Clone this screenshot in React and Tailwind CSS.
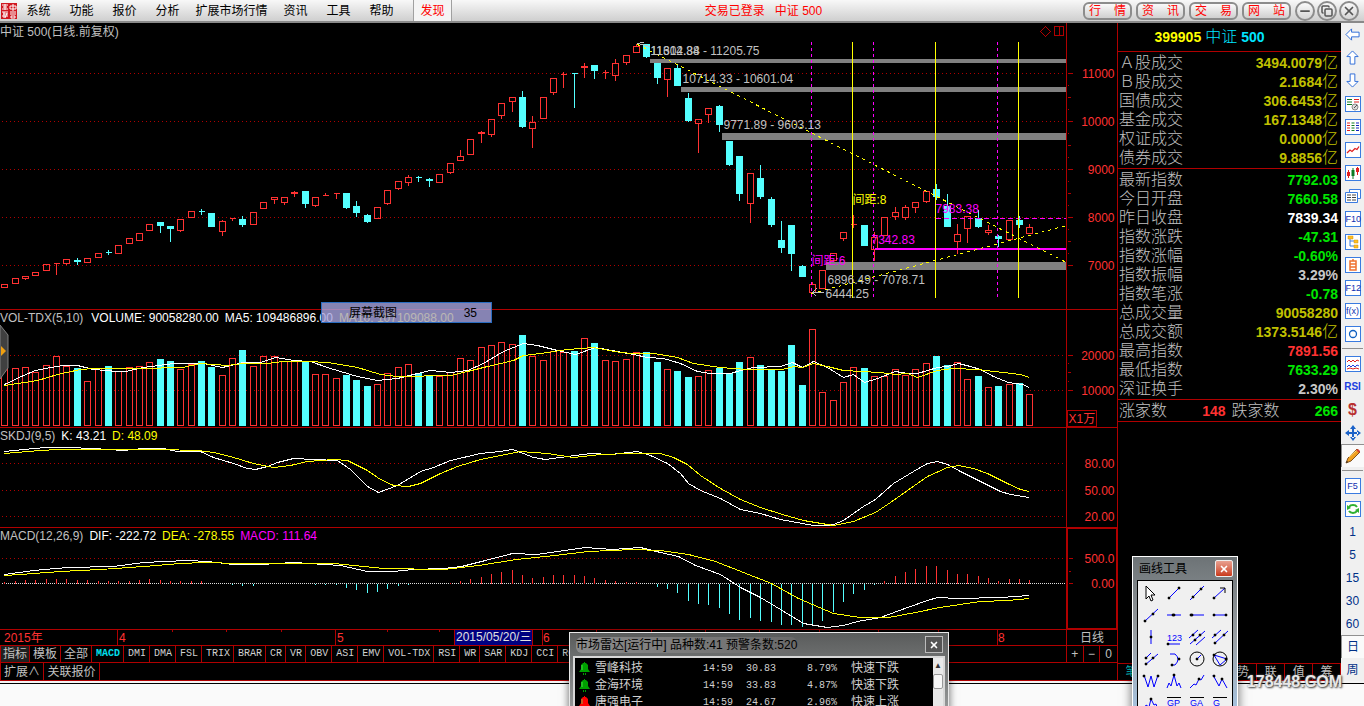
import { Minus, X, Copy } from 'lucide-react';

// One row per trading day: [rising, high, body top, body bottom, low, volume top, macd bar]
// Prices and volume are already in plot units, measured from the top of the window.
const DAYS = [
  [1, 284, 284, 288, 288, 365, 2], [1, 278, 278, 284, 284, 368, 3], [1, 276, 276, 279, 280, 367, 4], [1, 272, 272, 276, 276, 372, 4],
  [1, 264, 264, 271, 271, 365, 5], [1, 263, 263, 264, 275, 356, 5], [1, 258, 259, 264, 265, 366, 5], [0, 257, 260, 262, 265, 368, 4],
  [1, 258, 258, 263, 263, 381, 4], [1, 253, 253, 258, 258, 368, 3], [0, 249, 252, 253, 255, 366, 3], [1, 245, 245, 254, 254, 371, 3],
  [1, 238, 238, 244, 244, 367, 3], [1, 233, 233, 241, 241, 366, 4], [1, 224, 224, 231, 231, 362, 5], [0, 221, 222, 226, 233, 359, 4],
  [0, 226, 226, 229, 242, 361, 3], [1, 219, 219, 231, 232, 369, 3], [1, 211, 211, 218, 218, 364, 3], [0, 208, 211, 212, 215, 361, 3],
  [0, 213, 213, 227, 227, 367, 0], [1, 219, 221, 232, 236, 375, 0], [1, 217, 218, 219, 221, 358, -1], [0, 215, 219, 225, 227, 350, -2],
  [1, 212, 212, 225, 225, 366, -2], [1, 202, 202, 209, 209, 356, 0], [1, 197, 197, 200, 204, 356, 0], [1, 196, 197, 203, 205, 361, 0],
  [1, 190, 192, 194, 197, 360, 0], [0, 191, 191, 204, 208, 362, 0], [1, 196, 197, 206, 207, 374, -1], [1, 192, 195, 196, 196, 374, -1],
  [1, 192, 193, 194, 199, 378, -1], [0, 193, 193, 208, 209, 375, -4], [0, 200, 206, 213, 217, 380, -6], [0, 213, 215, 222, 223, 386, -9],
  [1, 207, 207, 219, 219, 384, -8], [1, 190, 190, 204, 205, 373, -5], [1, 181, 181, 189, 190, 367, -2], [1, 174, 177, 183, 186, 364, -1],
  [0, 175, 177, 178, 182, 373, 0], [0, 177, 179, 181, 187, 375, 0], [1, 173, 174, 183, 183, 376, 0], [1, 163, 163, 173, 174, 372, 1],
  [1, 149, 156, 161, 161, 358, 3], [1, 139, 139, 155, 155, 360, 5], [1, 130, 132, 134, 143, 347, 7], [1, 119, 119, 135, 137, 345, 10],
  [1, 103, 103, 116, 119, 342, 12], [1, 96, 97, 102, 112, 344, 14], [0, 90, 97, 127, 128, 335, 9], [1, 115, 122, 129, 148, 356, 6],
  [1, 97, 97, 119, 119, 360, 7], [1, 78, 78, 93, 95, 351, 9], [1, 71, 74, 75, 88, 352, 9], [0, 72, 73, 74, 108, 351, 9],
  [1, 62, 66, 68, 78, 338, 8], [0, 65, 65, 71, 79, 343, 6], [1, 69, 72, 73, 79, 360, 4], [1, 58, 63, 76, 81, 361, 3],
  [1, 55, 55, 63, 65, 359, 2], [1, 43, 46, 53, 53, 352, 2], [0, 43, 44, 57, 58, 352, 0], [0, 63, 63, 78, 84, 362, -3],
  [1, 67, 68, 80, 97, 369, -5], [0, 64, 68, 86, 86, 371, -9], [0, 92, 98, 121, 122, 377, -17], [1, 118, 119, 124, 153, 376, -20],
  [1, 108, 108, 115, 123, 370, -21], [0, 104, 106, 125, 132, 368, -24], [0, 140, 141, 165, 166, 373, -30], [0, 155, 156, 194, 201, 362, -36],
  [1, 173, 173, 204, 223, 357, -34], [0, 164, 178, 197, 199, 365, -37], [0, 196, 199, 225, 227, 369, -38], [0, 220, 240, 248, 253, 371, -41],
  [0, 225, 225, 254, 271, 345, -41], [0, 264, 266, 277, 277, 385, -43], [1, 281, 284, 293, 293, 329, -42], [1, 270, 270, 289, 289, 392, -37],
  [1, 253, 253, 261, 261, 400, -28], [1, 232, 232, 239, 241, 382, -18], [1, 214, 224, 225, 228, 367, -10], [0, 225, 225, 246, 246, 368, -6],
  [1, 231, 237, 250, 261, 376, -1], [1, 216, 217, 236, 236, 376, 3], [1, 206, 212, 217, 220, 369, 8], [1, 204, 207, 218, 220, 375, 12],
  [1, 201, 202, 208, 213, 369, 15], [1, 190, 191, 202, 203, 363, 18], [0, 183, 189, 197, 200, 356, 18], [0, 193, 206, 227, 227, 365, 14],
  [1, 223, 234, 242, 254, 362, 10], [1, 216, 216, 229, 243, 379, 10], [0, 209, 218, 227, 228, 376, 8], [1, 224, 230, 233, 235, 387, 6],
  [0, 234, 236, 239, 247, 386, 3], [1, 220, 220, 240, 240, 384, 5], [0, 215, 220, 225, 228, 383, 5], [1, 223, 227, 234, 234, 394, 4],
];

const VOL_MA5 = '4,384 23,375 35,370 50,367 63,365 77,365 93,369 117,371 125,371 143,367 173,363 203,363 222,367 243,362 260,362 275,357 293,360 310,361 327,367 340,371 357,376 377,380 397,378 413,374 430,370 450,372 467,370 483,363 503,351 523,343 537,345 557,350 575,354 595,347 617,351 633,354 647,357 663,358 680,363 697,371 710,373 730,373 740,370 753,367 780,366 792,362 802,367 813,361 827,367 843,377 853,374 864,382 877,378 895,371 907,373 917,373 937,367 947,366 958,363 970,366 980,369 993,376 1008,382 1022,384 1029,387';
const VOL_MA10 = '4,385 37,380 57,374 80,369 93,368 140,368 182,367 200,363 227,365 243,363 267,363 283,361 307,361 327,362 357,367 380,374 397,376 450,375 467,371 487,366 513,360 523,355 540,353 567,349 593,347 620,352 633,353 653,353 677,357 693,363 720,367 747,369 782,369 793,366 802,367 813,363 827,366 843,370 880,372 895,374 907,373 917,377 937,370 953,368 977,369 1020,374 1029,377';
const SK_K = '4,451 33,448 47,447 67,447 93,448 123,450 143,448 163,448 177,451 200,451 213,457 233,463 247,468 255,469 267,466 277,462 293,458 313,459 337,460 350,469 367,486 378,492 397,485 420,471 433,467 450,460 480,453 500,451 512,449 523,453 533,457 545,459 567,456 590,453 610,454 637,451 650,455 667,463 680,473 688,483 700,490 720,498 740,509 760,513 780,519 813,525 827,525 833,524 843,520 863,506 875,499 893,483 913,471 927,463 937,461 947,464 960,471 980,481 1000,491 1010,494 1029,497';
const SK_D = '4,453 40,450 57,449 100,449 160,449 197,450 213,452 230,456 253,463 273,467 290,465 307,461 333,459 347,460 367,470 380,479 393,485 408,486 420,483 440,473 457,466 480,459 500,455 520,451 547,453 573,457 600,454 633,453 660,453 673,457 687,464 700,475 720,488 740,499 760,507 782,514 803,520 833,525 853,521 875,512 890,502 907,490 927,476 947,467 958,465 973,468 987,473 1007,483 1020,489 1029,491';
const DIF = '4,574 33,570 67,567 113,566 143,562 187,560 207,561 233,564 260,564 293,562 340,565 367,571 393,571 413,569 443,568 461,566 485,560 512,553 536,554 557,551 585,547 612,549 640,547 660,552 678,556 695,565 720,574 740,587 760,597 780,609 803,623 827,627 843,625 857,621 880,617 907,607 927,600 937,597 957,598 1000,597 1029,595';
const DEA = '4,575 20,574 60,571 100,569 143,566 180,563 203,562 240,563 333,563 383,568 443,569 478,565 516,559 554,555 588,551 633,549 660,550 688,554 715,561 743,572 771,583 798,598 833,613 860,617 888,617 915,612 939,607 980,601 1007,600 1029,598';

const RED = '#ff3232';
const CYAN = '#54ffff';
const LINE = '#b00000';

const dayX = (i) => Math.floor(4.85 + i * 10.3535);

function Candle({ day, x }) {
  const [up, h, t, b, l] = day;
  return (
    <path
      d={`M${x - 3} ${t}H${x + 3}V${b - 1}H${x - 3}ZM${x} ${h}V${t}M${x} ${b - 1}V${l - 1}`}
      stroke={up ? RED : CYAN}
      fill={up ? 'none' : CYAN}
    />
  );
}

function GridLines({ at }) {
  return at.map((y) => (
    <line key={y} x1="1" x2="100%" y1={y} y2={y} stroke={LINE} strokeDasharray="1 3" />
  ));
}

function Curve({ points, color }) {
  return <polyline points={points} fill="none" stroke={color} />;
}

// A plot with its title laid over it and the value axis on its right.
function Panel({ height, top, title, plot, axis, axisClass = 'border-x border-[#b00000]' }) {
  return (
    <section className={`flex border-b border-[#b00000] ${height}`}>
      <div className="grid min-w-0 flex-1 overflow-hidden">
        <svg className="col-start-1 row-start-1 h-full w-full" shapeRendering="crispEdges" fontSize="12">
          <g transform={`translate(0.5 ${0.5 - top})`}>{plot}</g>
        </svg>
        <div className="col-start-1 row-start-1 flex gap-[6px] leading-4 whitespace-nowrap">{title}</div>
      </div>
      <div className={`w-[52px] shrink-0 ${axisClass}`}>
        <svg className="h-full w-full" shapeRendering="crispEdges" fontSize="12">
          <g transform={`translate(0.5 ${0.5 - top})`}>{axis}</g>
        </svg>
      </div>
    </section>
  );
}

function AxisLabels({ items, right = 47 }) {
  return items.map(([label, y]) => (
    <text key={label} x={right} y={y + 4} textAnchor="end" fill={RED}>{label}</text>
  ));
}

function Ticks({ items }) {
  return items.map(([y, w]) => <line key={y} x1="0" x2={w} y1={y} y2={y} stroke={LINE} />);
}

const PRICE_TICKS = [
  [73, 5], [85, 1], [97, 3], [109, 1], [121, 5], [133, 1], [145, 3], [157, 1], [169, 5], [181, 1],
  [193, 3], [205, 1], [217, 5], [229, 1], [241, 3], [253, 1], [265, 5],
];

function PricePlot() {
  return (
    <>
      <GridLines at={[73, 121, 169, 217, 265]} />
      <g fill="#808080">
        <rect x="649" y="58" width="1000" height="4" />
        <rect x="680" y="86" width="1000" height="5" />
        <rect x="721" y="132" width="1000" height="7" />
        <rect x="825" y="261" width="1000" height="8" />
      </g>
      {DAYS.map((d, i) => <Candle key={i} day={d} x={dayX(i)} />)}
      <g stroke="#ff00ff" strokeDasharray="3 3">
        <path d="M811 41V296M873 41V296M997 41V296" fill="none" />
        <line x1="935" x2="100%" y1="218" y2="218" strokeDasharray="5 3" />
      </g>
      <line x1="874" x2="100%" y1="248" y2="248" stroke="#ff00ff" strokeWidth="2" />
      <path d="M852 41V297M935 41V297M1018 41V297" stroke="#ffff00" />
      <path d="M637 44L1066 262M811 293L1066 225" stroke="#ffff00" strokeDasharray="3 4" />
      <g fill="#c0c0c0">
        <text x="650" y="54">11604.84</text>
        <text x="650" y="54">11312.38 - 11205.75</text>
        <text x="682" y="82">10714.33 - 10601.04</text>
        <text x="723" y="128">9771.89 - 9603.13</text>
        <text x="827" y="283">6896.49 - 7078.71</text>
        <text x="825" y="297">6444.25</text>
      </g>
      <path d="M823 292H812M816 288L812 292L816 296M650 46L637 43M639 42H643" stroke="#c0c0c0" fill="none" />
      <text x="852" y="203" fill="#ffff00">间距:8</text>
      <text x="811" y="264" fill="#ff00ff">间距:6</text>
      <text x="935" y="212" fill="#ff00ff">7983.38</text>
      <text x="871" y="243" fill="#ff00ff">7342.83</text>
      <path d="M1045 26L1050 31L1045 36L1040 31ZM1054 26H1063V35H1054ZM1059 26V35" stroke={LINE} fill="none" />
    </>
  );
}

function VolumePlot() {
  return (
    <>
      <GridLines at={[355, 390]} />
      {DAYS.map((d, i) => (
        <path
          key={i}
          d={`M${dayX(i) - 3} ${d[5]}h6V425h-6Z`}
          stroke={d[0] ? RED : CYAN}
          fill={d[0] ? 'none' : CYAN}
        />
      ))}
      <Curve points={VOL_MA5} color="#fff" />
      <Curve points={VOL_MA10} color="#ff0" />
    </>
  );
}

function MacdPlot() {
  return (
    <>
      <GridLines at={[558]} />
      <line x1="1" x2="100%" y1="583" y2="583" stroke="#e0e0e0" strokeDasharray="1 1" />
      {DAYS.map((d, i) => d[6] !== 0 && (
        <path key={i} d={`M${dayX(i)} 583v${-d[6]}`} stroke={d[6] > 0 ? RED : CYAN} />
      ))}
      <Curve points={DIF} color="#fff" />
      <Curve points={DEA} color="#ff0" />
    </>
  );
}

const MENUS = ['系统', '功能', '报价', '分析', '扩展市场行情', '资讯', '工具', '帮助'];

function Header() {
  return (
    <header className="flex h-[23px] shrink-0 items-center border-b-2 border-[#8a8a8a] bg-linear-to-b from-[#f8f8f8] to-[#cfcfcf] text-xs text-black">
      <svg className="ml-px h-4 w-4" viewBox="0 0 16 16">
        <rect width="16" height="16" fill="#d01820" />
        <path d="M1 2h6M2 4h4M1 6h6M4 1v6M9 3h6v3H9zM12 1v7M1 9h6M2 11h5M1 13h6M3 9v6M6 10l-2 5M9 9h6M9 11h6M10 13h4v2h-4z" stroke="#fff" fill="none" />
      </svg>
      <nav className="flex h-full items-center">
        {MENUS.map((m) => (
          <button key={m} className={m.length > 2 ? 'w-[85px] whitespace-nowrap' : 'w-[43px]'}>{m}</button>
        ))}
      </nav>
      <button className="ml-[10px] h-full w-[39px] border-x border-[#a0a0a0] bg-[#f4f4f4] text-[#ff0000]">发现</button>
      <div className="flex-1 pr-2 text-center text-[#ff0000]">交易已登录 &nbsp; 中证 500</div>
      <div className="flex gap-1 pr-1">
        {['行情', '资讯', '交易', '网站'].map((t) => (
          <button key={t} aria-label={t} className="flex h-[18px] w-[49px] items-center justify-between rounded-md border-2 border-[#8c8c8c] bg-linear-to-b from-[#fafafa] to-[#d0d0d0] px-1 text-[#ff0000]">
            <span>{t[0]}</span>
            <span>{t[1]}</span>
          </button>
        ))}
      </div>
      <div className="flex gap-[2px] pr-[5px]">
        {[Minus, Copy, X].map((Icon, i) => (
          <button key={i} aria-label={['最小化', '还原', '关闭'][i]} className="grid h-5 w-5 place-items-center rounded-full border-2 border-[#8c8c8c] bg-linear-to-b from-[#fafafa] to-[#d4d4d4] text-[#555]">
            <Icon className={i === 1 ? 'h-3 w-3' : 'h-[14px] w-[14px]'} strokeWidth={3} />
          </button>
        ))}
      </div>
    </header>
  );
}

function TimeAxis() {
  return (
    <div className="flex h-4 border-b border-[#b00000]">
      <svg className="h-full min-w-0 flex-1" fontSize="12" fill={RED} shapeRendering="crispEdges">
        <path d="M117.5 0V16M335.5 0V16M542.5 0V16M997.5 0V16" stroke={LINE} />
        <path d="M172.5 0v2M226.5 0v2M281.5 0v2M387.5 0v2M439.5 0v2M596.5 0v2M651.5 0v2M705.5 0v2M759.5 0v2M819.5 0v2M878.5 0v2M938.5 0v2" stroke={LINE} />
        <text x="4" y="12">2015年</text>
        <text x="119" y="12">4</text>
        <text x="337" y="12">5</text>
        <text x="543" y="12">6</text>
        <text x="998" y="12">8</text>
        <rect x="454.5" y="-1" width="78" height="16" fill="#000080" stroke={LINE} />
        <text x="456" y="11" fill="#e0e0e0">2015/05/20/三</text>
      </svg>
      <div className="w-[52px] border-x border-[#b00000] text-center leading-4">日线</div>
    </div>
  );
}

const TABS = ['MACD', 'DMI', 'DMA', 'FSL', 'TRIX', 'BRAR', 'CR', 'VR', 'OBV', 'ASI', 'EMV', 'VOL-TDX', 'RSI', 'WR', 'SAR', 'KDJ', 'CCI', 'ROC'];

function IndicatorTabs() {
  return (
    <div className="flex h-[17px] border-b border-[#b00000]">
      <div className="flex min-w-0 flex-1 overflow-hidden border-l border-[#b00000]">
        {['指标', '模板', '全部'].map((t, i) => (
          <button key={t} className={`border-r border-[#b00000] leading-4 ${i === 0 ? 'w-[29px] bg-[#202020]' : 'w-[31px]'}`}>{t}</button>
        ))}
        {TABS.map((t) => (
          <button
            key={t}
            className={`border-r border-[#b00000] pr-[3px] pl-1 font-['Liberation_Mono',monospace] text-[10px] leading-4 ${t === 'MACD' ? 'font-bold text-[#00e0f0]' : 'text-[#d0d0d0]'}`}
          >
            {t}
          </button>
        ))}
      </div>
      <div className="grid w-[52px] grid-cols-3 divide-x divide-[#b00000] border-x border-[#b00000]">
        {['+', '−', '0'].map((t) => <button key={t} className="leading-4">{t}</button>)}
      </div>
    </div>
  );
}

const TURNOVER = [
  ['Ａ股成交', '3494.0079', '亿'], ['Ｂ股成交', '2.1684', '亿'], ['国债成交', '306.6453', '亿'],
  ['基金成交', '167.1348', '亿'], ['权证成交', '0.0000', '亿'], ['债券成交', '9.8856', '亿'],
].map((r) => [...r, 'text-[#c0c000]']);

const INDEX = [
  ['最新指数', '7792.03', '', 'text-[#00e600]'], ['今日开盘', '7660.58', '', 'text-[#00e600]'],
  ['昨日收盘', '7839.34', '', 'text-white'], ['指数涨跌', '-47.31', '', 'text-[#00e600]'],
  ['指数涨幅', '-0.60%', '', 'text-[#00e600]'], ['指数振幅', '3.29%', '', 'text-[#c8c8c8]'],
  ['指数笔涨', '-0.78', '', 'text-[#00e600]'], ['总成交量', '90058280', '', 'text-[#c0c000]'],
  ['总成交额', '1373.5146', '亿', 'text-[#c0c000]'], ['最高指数', '7891.56', '', 'text-[#ff3232]'],
  ['最低指数', '7633.29', '', 'text-[#00e600]'], ['深证换手', '2.30%', '', 'text-[#c8c8c8]'],
];

function QuoteTable({ rows }) {
  return (
    <div className="border-b border-[#b00000] py-px">
      <table className="w-full">
        <tbody>
          {rows.map(([label, value, unit, color]) => (
            <tr key={label}>
              <th scope="row" className="p-0 pl-px text-left align-top text-base leading-[19px] font-light">{label}</th>
              <td className="p-0 pr-[3px] align-top">
                <div className={`flex h-[19px] items-center justify-end text-sm font-bold ${color}`}>
                  {value}
                  {unit && <span className="text-base leading-[19px] font-light">{unit}</span>}
                </div>
              </td>
            </tr>
          ))}
        </tbody>
      </table>
    </div>
  );
}

function QuotePanel() {
  return (
    <aside className="flex w-[223px] shrink-0 flex-col text-[#c0c0c0]">
      <h1 className="flex h-[29px] items-center justify-center gap-1 border-b border-[#b00000] pr-10 text-sm font-bold text-[#00e5ff]">
        <span className="text-[#ffff00]">399905</span>
        <span className="text-base font-light">中证</span>
        <span>500</span>
      </h1>
      <QuoteTable rows={TURNOVER} />
      <QuoteTable rows={INDEX} />
      <div className="flex h-[22px] items-center border-b border-[#b00000] pr-[3px] pl-px text-base font-light">
        <span>涨家数</span>
        <span className="flex-1 text-right text-sm font-bold text-[#ff3232]">148</span>
        <span className="ml-[6px]">跌家数</span>
        <span className="flex-1 text-right text-sm font-bold text-[#00e600]">266</span>
      </div>
      <div className="flex-1" />
      <div className="grid h-[18px] grid-cols-8 border-y border-[#b00000]">
        {[...'笔价分盘势联值筹'].map((t, i) => (
          <button key={t} className={`border-r border-[#b00000] leading-4 ${i === 0 ? 'text-[#00c8c8]' : ''}`}>{t}</button>
        ))}
      </div>
    </aside>
  );
}

function Framed({ children }) {
  return (
    <svg className="h-4 w-4" viewBox="0 0 16 16" fill="none">
      <rect x="0.5" y="0.5" width="15" height="15" fill="#fff" stroke="#3a7be0" />
      {children}
    </svg>
  );
}

function ArrowIcon({ rotate }) {
  return (
    <svg className="h-[15px] w-[15px]" viewBox="0 0 16 16">
      <path d="M1 8L7 2V5.500H15V10.500H7V14Z" fill="#fff" stroke="#2a6ad8" transform={`rotate(${rotate} 8 8)`} />
    </svg>
  );
}

const SIDE_ICONS = [
  ['后退', <ArrowIcon rotate={0} />],
  ['上移', <ArrowIcon rotate={90} />],
  ['下移', <ArrowIcon rotate={-90} />],
  ['报价设置', <Framed><path d="M2 3.500h5M2 6h5M2 8.500h5" stroke="#0a7a20" /><path d="M9 3.500h5M9 6h5" stroke="#e02020" /><circle cx="10" cy="11" r="3" fill="#ddd" stroke="#888" /><path d="M9 12l3-3" stroke="#555" /></Framed>],
  ['报价', <Framed><path d="M2 4h3M2 6.500h3M2 9h3M2 11.500h3" stroke="#e02020" /><path d="M6.500 4h3M6.500 6.500h3M6.500 9h3M6.500 11.500h3" stroke="#0a7a20" /><path d="M11 4h3M11 6.500h3M11 9h3M11 11.500h3" stroke="#1020c0" /></Framed>],
  ['分时', <Framed><path d="M2 11l3-3 2 1.500 3-3 2 1 2-3" stroke="#e02020" strokeWidth="1.300" /></Framed>],
  ['K线', <Framed><path d="M3.500 5v8M12.500 2v8" stroke="#e02020" /><path d="M2 7h3v4H2zM11 3h3v4h-3z" fill="#e02020" /><path d="M8 3v11" stroke="#0a7a20" /><path d="M6.500 5h3v6h-3z" fill="#0a7a20" /></Framed>],
  ['资料', <svg className="h-4 w-4" viewBox="0 0 16 16"><path d="M4.500 1.500h11v9h-11z" fill="#fff" stroke="#3a7be0" /><path d="M.5 4.500h12v10H.5z" fill="#fff" stroke="#3a7be0" /><path d="M2 7h4M7 7h4M2 9.500h4M7 9.500h4M2 12h4M7 12h4" stroke="#444" /></svg>],
  ['F10', 'F10'],
  ['结构', <Framed><path d="M5 4v8h4M5 7h4" stroke="#3a7be0" /><path d="M3 2h5v3H3zM9 6h4v3H9zM9 11h4v3H9z" fill="#ffc020" stroke="#d09010" strokeWidth="0.500" /></Framed>],
  ['自选', <Framed><path d="M5 4h6v9H5zM5 7h6M5 10h6M8 2v2" stroke="#f07030" strokeWidth="1.500" /></Framed>],
  ['F12', 'F12'],
  ['公式', 'f(x)'],
  ['圆', <Framed><circle cx="8" cy="8" r="3.500" stroke="#1060c0" strokeWidth="1.300" /></Framed>],
  null,
  ['叠加', <Framed><path d="M2 6l2-2 2 2 2-2 2 2 2-2 2 1" stroke="#e02020" /><path d="M2 11l2-2 2 2 2-2 2 2 2-2 2 1" stroke="#2040e0" /><path d="M2 13l3-1 3 1 3-1 3 1" stroke="#e02020" /></Framed>],
  ['RSI', <span className="text-[10px] font-bold text-[#2040e0]">RSI</span>],
  ['资金', <span className="text-base leading-4 font-bold text-[#b83030]">$</span>],
  ['移动', <svg className="h-4 w-4" viewBox="0 0 16 16" fill="#1b62c8"><path d="M8 0l3 4H5zM8 16l3-4H5zM0 8l4-3v6zM16 8l-4-3v6zM7 3h2v10H7zM3 7h10v2H3z" /></svg>],
  ['画线', <svg className="h-4 w-4" viewBox="0 0 16 16"><path d="M1 15l2-5 9-9 3 3-9 9z" fill="#f0a020" stroke="#805020" /><path d="M4 9l8-7" stroke="#ffe090" /><path d="M11 2l3 3 1-2-2-2z" fill="#d84030" /><path d="M1 15l1-2 1 1z" fill="#222" /></svg>, true],
  null,
  ['F5', 'F5'],
  ['刷新', <Framed><path d="M12 6a4.500 3.500 0 0 0-8 0M4 10a4.500 3.500 0 0 0 8 0" stroke="#30b030" strokeWidth="2" /><path d="M2 4v5l4-2zM14 12V7l-4 2z" fill="#30b030" /></Framed>],
];

const PERIODS = ['1', '5', '15', '30', '60', '日', '周'];

function SideBar() {
  return (
    <div className="flex w-[23px] shrink-0 flex-col bg-[#f0f0f0] text-[#003088]">
      {SIDE_ICONS.map((item, i) => {
        if (!item) return <hr key={i} className="mx-px my-[3px] border-t border-[#909090]" />;
        const [name, icon, pressed] = item;
        return (
          <button
            key={i}
            aria-label={name}
            className={`grid h-[23px] place-items-center ${pressed ? 'border-t border-l border-[#909090] bg-[#fafafa]' : ''}`}
          >
            {typeof icon === 'string' ? (
              <span className="h-4 w-4 border border-[#3a7be0] bg-white text-center text-[9px] leading-[14px] text-[#1030b0]">
                {icon}
              </span>
            ) : icon}
          </button>
        );
      })}
      {PERIODS.map((p) => (
        <button key={p} className={`h-[23px] shrink-0 text-xs ${p === '日' ? 'border-t border-l border-[#909090] bg-[#fafafa]' : ''}`}>{p}</button>
      ))}
    </div>
  );
}

const ALERTS = [
  ['雪峰科技', '14:59', '30.83', '8.79%', '快速下跌', '#00a000'],
  ['金海环境', '14:59', '33.83', '4.87%', '快速下跌', '#00a000'],
  ['唐强电子', '14:59', '24.67', '2.96%', '快速上涨', '#ff0000'],
];

function RadarWindow() {
  return (
    <section className="absolute top-[632px] left-[569px] w-[380px] border border-[#e8e8e8] bg-linear-to-b from-[#5a5c5c] to-[#9a9c9c] px-[3px] text-xs shadow-[0_0_8px_rgba(0,0,0,0.6)]">
      <h2 className="flex h-[23px] items-center justify-between pl-[3px] text-black">
        <span className="rounded-md bg-linear-to-r from-[#8c8c8c] to-[#6a6a6a]">市场雷达[运行中] 品种数:41 预警条数:520</span>
        <button aria-label="关闭" className="mr-[2px] grid h-[17px] w-[18px] place-items-center border border-[#bbb] bg-[#555] text-white">
          <X className="h-[10px] w-[10px]" strokeWidth={4} />
        </button>
      </h2>
      <div className="flex border-2 border-[#d8d8d8] bg-black text-[#d0d0d0]">
        <div className="flex-1 pt-[2px]">
          <table className="w-full table-fixed">
            <tbody>
              {ALERTS.map(([name, time, price, rate, note, color]) => (
                <tr key={name} className="h-[17px] leading-[17px]">
                  <td className="w-5 p-0 pl-1">
                    <svg className="h-[13px] w-[11px]" viewBox="0 0 11 13" fill={color}>
                      <path d="M4 1h1V0h1v1h1l2 2v4l2 3H0l2-3V3zM4 11h1v2H4zM6 11h1v2H6z" />
                      <path d="M3 3v5" stroke="#60ff60" opacity="0.700" />
                    </svg>
                  </td>
                  <td className="w-[108px] p-0">{name}</td>
                  <td className="w-[43px] p-0 font-['Liberation_Mono',monospace] text-[10px]">{time}</td>
                  <td className="w-[43px] p-0 font-['Liberation_Mono',monospace] text-[10px]">{price}</td>
                  <td className="w-12 p-0 text-right font-['Liberation_Mono',monospace] text-[10px]">{rate}</td>
                  <td className="p-0 pl-[14px]">{note}</td>
                </tr>
              ))}
            </tbody>
          </table>
        </div>
        <div className="w-[10px] bg-[#e8e8e8] text-center text-[8px] leading-4 text-[#333]">
          ▲
          <div className="h-[15px] rounded-xs border border-[#999] bg-[#f8f8f8]" />
        </div>
      </div>
    </section>
  );
}

const dot = (x, y) => `M${x - 1} ${y - 1}h2v2h-2z`;

// [blue strokes, black handles, extra drawing]
const TOOLS = [
  [null, null, <path key="p" d="M5 3v13l3-3 2 5 2-1-2-5h4z" fill="#fff" stroke="#000" />],
  ['M5 15L15 5', dot(5, 15) + dot(15, 5)],
  ['M3 17L17 3', dot(6, 14) + dot(14, 6)],
  ['M4 15L15 5', dot(4, 15), <path key="p" d="M10 5h5v5" stroke="#000" fill="none" />],
  ['M4 16L17 4', dot(4, 16) + dot(12, 9)],
  ['M3 10H17', dot(10, 10) + dot(9, 10)],
  ['M4 10H17', dot(4, 10) + dot(5, 10)],
  ['M4 10H16', dot(4, 10) + dot(16, 10)],
  ['M10 3V17', dot(10, 10)],
  ['M3 17H16', dot(4, 17), <text key="t" x="3" y="14" fontSize="9" fill="#0000ff">123</text>],
  ['M2 11L11 3M3 17L18 4M9 18L18 10', dot(6, 8) + dot(13, 8) + dot(8, 13)],
  ['M2 11L11 3M4 17L18 4', dot(5, 8) + dot(14, 8) + dot(5, 16)],
  ['M4 10L10 4M4 16L17 5', dot(5, 9) + dot(12, 9) + dot(5, 15)],
  ['M6 5H11Q17 10 11 16H7', dot(8, 16) + dot(15, 10)],
  ['M10 10L14 6', dot(10, 10), <circle key="c" cx="10" cy="10" r="7" stroke="#000" fill="none" />],
  ['M4 6L17 10L10 16Z', dot(4, 6) + dot(16, 10), <circle key="c" cx="10" cy="10" r="7" stroke="#000" fill="none" />],
  ['M3 4L7 16L10 5L13 16L17 4', dot(3, 5) + dot(17, 5)],
  ['M3 17L5 12L7 15L10 4L13 15L15 12L17 17', dot(10, 4)],
  ['M3 17L7 13L9 14L12 8L14 9L17 4', dot(12, 8)],
  ['M3 4L9 15L12 8L17 17', dot(4, 5) + dot(12, 8)],
  ['M3 17L5 12L8 14L10 6L13 12L15 11L17 17', dot(10, 6)],
  [null, null, 'GP'], [null, null, 'GA'], [null, null, 'G'],
];

function DrawingTools() {
  return (
    <section className="absolute top-[556px] left-[1132px] w-[106px] border border-white bg-linear-to-b from-[#6d7376] via-[#9aa0a4] to-[#a8c8e8] px-1 text-xs shadow-[0_0_10px_rgba(0,0,0,0.6)]">
      <h2 className="flex h-[23px] items-center justify-between pl-[2px] text-black">
        <span>画线工具</span>
        <button aria-label="关闭" className="grid h-[17px] w-[18px] place-items-center rounded-xs border border-[#eee] bg-linear-to-b from-[#e8a090] to-[#c83818] text-white">
          <X className="h-[10px] w-[10px]" strokeWidth={4} />
        </button>
      </h2>
      <div className="grid grid-cols-4 border border-black bg-[#f0f0f0] px-px pt-px pb-1">
        {TOOLS.map(([blue, handles, extra], i) => (
          <button key={i} aria-label={`画线 ${i + 1}`} className="grid h-[22px] place-items-center">
            <svg className="h-5 w-5" viewBox="0 0 20 20" fill="none">
              {blue && <path d={blue} stroke="#0000ff" />}
              {typeof extra === 'string' ? (
                <>
                  <path d="M3 4.500H17" stroke="#000" />
                  <text x="3" y="13" fontSize="9" fill="#0000ff">{extra}</text>
                </>
              ) : extra}
              {handles && <path d={handles} fill="#000" stroke="#000" strokeWidth="0.500" />}
            </svg>
          </button>
        ))}
      </div>
    </section>
  );
}

export default function App() {
  return (
    <div className="relative flex h-screen flex-col overflow-hidden bg-[#fafafa] font-['Liberation_Sans','Noto_Sans_CJK_SC',sans-serif] text-xs">
      <Header />
      <main className="flex bg-black text-[#c0c0c0]">
        <div className="min-w-0 flex-1">
          <Panel
            height="h-[287px]"
            top={23}
            title={<span className="pt-px">中证 500(日线.前复权)</span>}
            plot={<PricePlot />}
            axis={
              <>
                <Ticks items={PRICE_TICKS} />
                <AxisLabels items={[['11000', 73], ['10000', 121], ['9000', 169], ['8000', 217], ['7000', 265]]} />
              </>
            }
          />
          <Panel
            height="h-[118px]"
            top={310}
            title={
              <>
                <span className="pr-[2px]">VOL-TDX(5,10)</span>
                <span className="text-white">VOLUME: 90058280.00</span>
                <span className="text-white">MA5: 109486896.00</span>
                <span className="text-[#ffff00]">MA10: 107109088.00</span>
              </>
            }
            plot={<VolumePlot />}
            axis={
              <>
                <Ticks items={[[355, 5], [363, 1], [372, 3], [381, 1], [390, 5]]} />
                <AxisLabels items={[['20000', 355], ['10000', 390]]} />
                <rect x="0" y="410" width="29" height="16" fill="none" stroke={LINE} />
                <text x="1" y="422" fill={RED}>X1万</text>
              </>
            }
          />
          <Panel
            height="h-[100px]"
            top={428}
            title={
              <>
                <span>SKDJ(9,5)</span>
                <span className="text-white">K: 43.21</span>
                <span className="text-[#ffff00]">D: 48.09</span>
              </>
            }
            plot={
              <>
                <GridLines at={[463, 490, 516]} />
                <Curve points={SK_K} color="#fff" />
                <Curve points={SK_D} color="#ff0" />
              </>
            }
            axis={<AxisLabels items={[['80.00', 463], ['50.00', 490], ['20.00', 516]]} />}
          />
          <Panel
            height="h-[102px]"
            top={528}
            title={
              <>
                <span>MACD(12,26,9)</span>
                <span className="text-white">DIF: -222.72</span>
                <span className="text-[#ffff00]">DEA: -278.55</span>
                <span className="text-[#ff00ff]">MACD: 111.64</span>
              </>
            }
            plot={<MacdPlot />}
            axisClass="border-x-2 border-b border-t border-[#b00000]"
            axis={
              <>
                <Ticks items={[[557, 4], [570, 2], [582, 4]]} />
                <AxisLabels items={[['500.0', 557], ['0.00', 582]]} right={46} />
              </>
            }
          />
          <TimeAxis />
          <IndicatorTabs />
          <div className="flex h-[18px] border-b border-[#b00000]">
            <button className="w-11 border-x border-[#b00000]">扩展∧</button>
            <button className="w-14 border-r border-[#b00000]">关联报价</button>
            <div className="flex-1 border-r border-[#b00000]" />
          </div>
        </div>
        <QuotePanel />
        <SideBar />
      </main>
      <div className="h-[3px] border-b border-black bg-[#f4f4f4]" />

      <button aria-label="展开" className="absolute top-[325px] left-0">
        <svg className="h-[54px] w-[10px]" viewBox="0 0 10 54">
          <path d="M0 0L8 10V43L0 54Z" fill="#404040" stroke="#808080" />
          <path d="M1 21L6 26L1 31Z" fill="#f0a010" />
        </svg>
      </button>
      <div className="absolute top-[302px] left-[321px] flex h-[21px] w-[171px] items-center border border-[#2a6cc0] bg-[#a8a4e0]/80 pr-[14px] pl-[27px] text-black">
        <span className="flex-1">屏幕截图</span>
        <span>35</span>
      </div>
      <RadarWindow />
      <DrawingTools />
      <div className="absolute right-[22px] bottom-[14px] text-base leading-5 font-bold text-[#e8e8e8] [text-shadow:1px_1px_2px_#444,0_0_2px_#777]">
        178448.COM
      </div>
    </div>
  );
}
